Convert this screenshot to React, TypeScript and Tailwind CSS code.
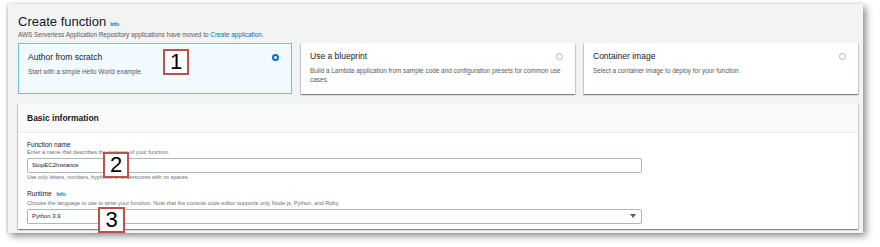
import React from "react";

function Badge({ n, className }: { n: string; className: string }) {
  return (
    <div
      className={
        "absolute flex items-center justify-center bg-white border-2 border-[#c0504d] text-black text-[22px] leading-none " +
        className
      }
      style={{ fontFamily: '"Liberation Sans", Arial, sans-serif' }}
    >
      {n}
    </div>
  );
}

function Radio({ selected }: { selected?: boolean }) {
  return selected ? (
    <div className="w-[7px] h-[7px] rounded-full border-[2px] border-[#0073bb] bg-white" />
  ) : (
    <div className="w-[7px] h-[7px] rounded-full border border-[#aab7b8] bg-white" />
  );
}

function Card({
  title,
  desc,
  selected,
}: {
  title: string;
  desc: string;
  selected?: boolean;
}) {
  return (
    <div
      className={
        "relative w-[274px] h-[51px] px-[9px] pt-[7px] " +
        (selected
          ? "bg-[#f1faff] border border-[#6cc3dc]"
          : "bg-white shadow-[0_1px_1px_0_rgba(0,28,36,0.3),1px_1px_1px_0_rgba(0,28,36,0.15),-1px_1px_1px_0_rgba(0,28,36,0.15)]")
      }
    >
      <div className="flex items-center justify-between pr-[3px]">
        <div className="text-[8.5px] leading-[12px] text-[#16191f]">{title}</div>
        <Radio selected={selected} />
      </div>
      <div className="mt-[4px] text-[6.4px] leading-[9px] text-[#545b64] -mr-[2px]">
        {desc}
      </div>
    </div>
  );
}

export default function App() {
  return (
    <div
      className="w-[880px] h-[247px] bg-white pt-[4px] pl-[8px]"
      style={{ fontFamily: '"Liberation Sans", Arial, sans-serif' }}
    >
      <div className="relative w-[855px] h-[229px] bg-[#f2f3f3] overflow-hidden pl-[10px] pt-[10px] shadow-[3px_3px_7px_rgba(0,0,0,0.45),-1px_0_2px_rgba(0,0,0,0.15)]">
        <div className="flex items-baseline gap-[4px]">
          <div className="text-[13px] leading-[16px] text-[#16191f]">Create function</div>
          <div className="text-[5px] font-bold text-[#0073bb]">Info</div>
        </div>
        <div className="text-[6.4px] leading-[8px] text-[#545b64] mt-[1px]">
          AWS Serverless Application Repository applications have moved to{" "}
          <span className="text-[#0073bb]">Create application</span>.
        </div>

        <div className="flex gap-[9px] mt-[4px]">
          <Card selected title="Author from scratch" desc="Start with a simple Hello World example." />
          <Card
            title="Use a blueprint"
            desc="Build a Lambda application from sample code and configuration presets for common use cases."
          />
          <Card title="Container image" desc="Select a container image to deploy for your function." />
        </div>

        <div className="mt-[10px] w-[840px] bg-white shadow-[0_1px_1px_0_rgba(0,28,36,0.3),1px_1px_1px_0_rgba(0,28,36,0.15),-1px_1px_1px_0_rgba(0,28,36,0.15)] pb-[5px]">
          <div className="h-[29px] bg-[#fafafa] border-b border-[#eaeded] flex items-center px-[9px]">
            <div className="text-[8.5px] font-bold text-[#16191f]">Basic information</div>
          </div>
          <div className="px-[9px] pt-[8px]">
            <div className="text-[6.6px] leading-[8px] text-[#16191f]">Function name</div>
            <div className="text-[5.6px] leading-[7px] text-[#687078]">
              Enter a name that describes the purpose of your function.
            </div>
            <div className="mt-[2px] w-[615px] h-[15px] border border-[#aab7b8] rounded-[2px] flex items-center px-[4px]">
              <span className="text-[6px] text-[#16191f]">StopEC2Instance</span>
            </div>
            <div className="mt-[1px] text-[5.4px] leading-[7px] text-[#687078]">
              Use only letters, numbers, hyphens, or underscores with no spaces.
            </div>
            <div className="mt-[9px] flex items-baseline gap-[5px]">
              <span className="text-[6.6px] leading-[8px] text-[#16191f]">Runtime</span>
              <span className="text-[5px] font-bold text-[#0073bb]">Info</span>
            </div>
            <div className="text-[5.6px] leading-[8px] text-[#687078]">
              Choose the language to use to write your function. Note that the console code editor supports only Node.js, Python, and Ruby.
            </div>
            <div className="mt-[2px] w-[615px] h-[15px] border border-[#aab7b8] rounded-[2px] flex items-center justify-between pl-[4px] pr-[5px]">
              <span className="text-[6px] text-[#16191f]">Python 3.9</span>
              <svg width="6" height="4" viewBox="0 0 6 4">
                <path d="M0 0 L6 0 L3 4 Z" fill="#545b64" />
              </svg>
            </div>
          </div>
        </div>

        <Badge n="1" className="left-[155px] top-[45px] w-[26px] h-[26px]" />
        <Badge n="2" className="left-[95px] top-[148px] w-[26px] h-[26px]" />
        <Badge n="3" className="left-[90px] top-[203px] w-[27px] h-[26px]" />
      </div>
    </div>
  );
}
